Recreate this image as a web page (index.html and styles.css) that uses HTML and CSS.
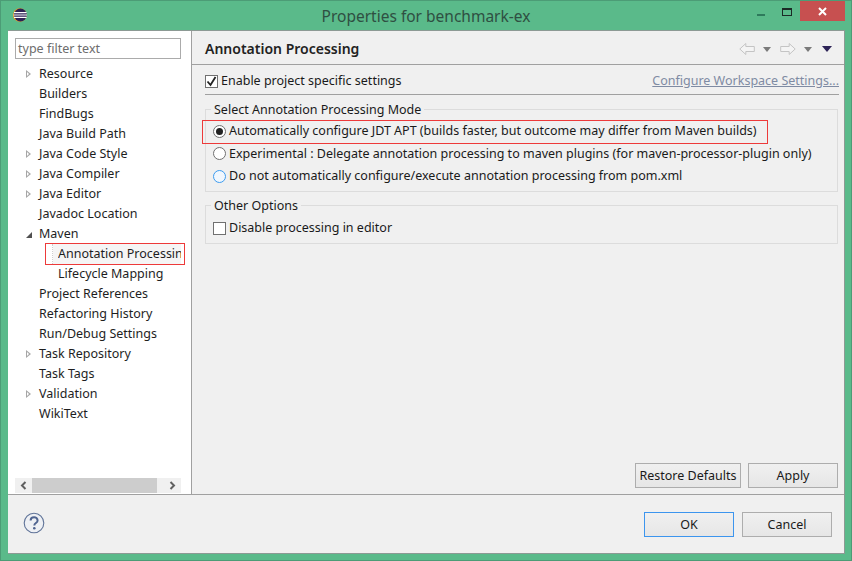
FILE: index.html
```html
<!DOCTYPE html>
<html lang="en">
<head>
<meta charset="utf-8">
<title>Properties for benchmark-ex</title>
<link rel="stylesheet" href="styles.css">
</head>
<body>
<div class="window">
  <header class="titlebar">
    <svg class="app-icon" width="16" height="16" viewBox="0 0 16 16">
      <circle cx="7.8" cy="8" r="6.8" fill="#f7941e"/>
      <circle cx="8.4" cy="8" r="6.4" fill="#2c2255"/>
      <path d="M2 5.6h12.6M1.6 8h13.4M2 10.4h12.6" stroke="#fff" stroke-width="1.1"/>
    </svg>
    <div class="title">Properties for benchmark-ex</div>
    <div class="win-controls">
      <span class="win-min"></span>
      <span class="win-max"></span>
      <span class="win-close">
        <svg width="9" height="9" viewBox="0 0 9 9"><path d="M1 1l7 7M8 1l-7 7" stroke="#fff" stroke-width="2"/></svg>
      </span>
    </div>
  </header>
  <div class="client">
    <div class="panes">
      <aside class="sidebar">
        <div class="filter">type filter text</div>
        <ul class="tree">
          <li class="row"><span class="tw closed"></span>Resource</li>
          <li class="row"><span class="tw"></span>Builders</li>
          <li class="row"><span class="tw"></span>FindBugs</li>
          <li class="row"><span class="tw"></span>Java Build Path</li>
          <li class="row"><span class="tw closed"></span>Java Code Style</li>
          <li class="row"><span class="tw closed"></span>Java Compiler</li>
          <li class="row"><span class="tw closed"></span>Java Editor</li>
          <li class="row"><span class="tw"></span>Javadoc Location</li>
          <li class="row"><span class="tw open"></span>Maven</li>
          <li class="row child selected"><span class="clip">Annotation Processing</span></li>
          <li class="row child"><span class="clip">Lifecycle Mapping</span></li>
          <li class="row"><span class="tw"></span>Project References</li>
          <li class="row"><span class="tw"></span>Refactoring History</li>
          <li class="row"><span class="tw"></span>Run/Debug Settings</li>
          <li class="row"><span class="tw closed"></span>Task Repository</li>
          <li class="row"><span class="tw"></span>Task Tags</li>
          <li class="row"><span class="tw closed"></span>Validation</li>
          <li class="row"><span class="tw"></span>WikiText</li>
        </ul>
        <div class="hscroll">
          <svg class="arrow" width="17" height="15" viewBox="0 0 17 15"><path d="M10.5 4l-3.5 3.500 3.500 3.500" fill="none" stroke="#606060" stroke-width="2"/></svg>
          <div class="track"><div class="thumb"></div></div>
          <svg class="arrow" width="24" height="15" viewBox="0 0 24 15"><path d="M13.500 4l3.500 3.500-3.500 3.500" fill="none" stroke="#606060" stroke-width="2"/></svg>
        </div>
        <div class="mark mark-tree"></div>
      </aside>
      <main class="page">
        <div class="page-head">
          <h1>Annotation Processing</h1>
          <div class="nav">
            <svg width="16" height="14" viewBox="0 0 16 14"><path d="M.8 7l6-5.500V4.500h8.500v5H6.800v3z" fill="#f4f4f4" stroke="#c4c4c4"/></svg>
            <span class="caret gray"></span>
            <svg width="16" height="14" viewBox="0 0 16 14"><path d="M15.200 7l-6-5.500V4.500H.7v5h8.500v3z" fill="#f4f4f4" stroke="#c4c4c4"/></svg>
            <span class="caret gray"></span>
            <span class="caret dark"></span>
          </div>
        </div>
        <div class="enable-row">
          <label class="opt">
            <span class="check on">
              <svg width="11" height="11" viewBox="0 0 11 11"><path d="M1.500 5.500l3 3.500 5-8" fill="none" stroke="#222" stroke-width="1.800"/></svg>
            </span>Enable project specific settings
          </label>
          <a class="link">Configure Workspace Settings...</a>
        </div>
        <div class="rule"></div>
        <section class="group mode">
          <div class="legend">Select Annotation Processing Mode</div>
          <label class="opt"><span class="radio on"></span>Automatically configure JDT APT (builds faster, but outcome may differ from Maven builds)</label>
          <label class="opt"><span class="radio"></span>Experimental : Delegate annotation processing to maven plugins (for maven-processor-plugin only)</label>
          <label class="opt"><span class="radio focus"></span>Do not automatically configure/execute annotation processing from pom.xml</label>
        </section>
        <section class="group other">
          <div class="legend">Other Options</div>
          <label class="opt"><span class="check"></span>Disable processing in editor</label>
        </section>
        <div class="page-actions">
          <button class="btn restore">Restore Defaults</button>
          <button class="btn apply">Apply</button>
        </div>
        <div class="mark mark-radio"></div>
      </main>
    </div>
    <footer class="footer">
      <svg class="help" width="22" height="22" viewBox="0 0 22 22">
        <circle cx="11" cy="11" r="9.800" fill="#eef0f4" stroke="#5f7398" stroke-width="1.100"/>
        <path d="M7.600 8.400c0-4.300 7-4.300 7 0 0 2.700-3.300 2.500-3.300 5" fill="none" stroke="#4f6490" stroke-width="2"/>
        <circle cx="11.300" cy="16.300" r="1.300" fill="#4f6490"/>
      </svg>
      <div class="footer-actions">
        <button class="btn default">OK</button>
        <button class="btn">Cancel</button>
      </div>
    </footer>
  </div>
</div>
</body>
</html>
```
FILE: styles.css
```css
* { box-sizing: border-box; }
html, body { margin: 0; height: 100%; }
body { font: 12.500px/16px "Noto Sans", "Open Sans", sans-serif; color: #1a1a1a; overflow: hidden; }
.window { width: 852px; height: 561px; background: #5aba8a; border: 1px solid #4c9c76; display: flex; flex-direction: column; padding: 0 6px 6px; }
.titlebar { height: 29px; display: flex; align-items: center; position: relative; flex: none; }
.app-icon { margin: 0 0 1px 5px; }
.title { position: absolute; left: 0; right: 0; top: 5px; text-align: center; font-size: 15.500px; line-height: 20px; color: #2f4f42; }
.win-controls { margin-left: auto; display: flex; align-items: flex-start; align-self: flex-start; position: relative; }
.win-min { width: 8px; height: 2px; background: #2e7a5c; margin: 13px 17px 0 0; }
.win-max { width: 10px; height: 8px; border: 1px solid #1c2a26; border-top-width: 2px; margin: 7px 8px 0 0; }
.win-close { width: 45px; height: 20px; background: #c75050; display: flex; align-items: center; justify-content: center; margin-right: 0; }
.client { flex: 1; display: flex; flex-direction: column; background: #f0f0f0; border: 1px solid #8c9a94; border-left: 0; min-height: 0; margin-left: 1px; }
.panes { flex: 1; display: flex; min-height: 0; border-bottom: 1px solid #a0a0a0; }
.sidebar { width: 184px; background: #fff; border-right: 1px solid #a0a0a0; padding: 7px 10px 0 7px; display: flex; flex-direction: column; position: relative; flex: none; }
.filter { height: 21px; border: 1px solid #ababab; padding-left: 2px; line-height: 19px; color: #6d6d6d; flex: none; }
.tree { list-style: none; margin: 5px 0 0; padding: 0; flex: 1; }
.row { height: 20px; line-height: 20px; display: flex; align-items: center; white-space: nowrap; color: #1e1e1e; }
.tw { width: 24px; height: 20px; flex: none; position: relative; }
.tw.closed::after { content: ""; position: absolute; left: 11px; top: 6px; border-left: 5px solid #a6a6a6; border-top: 4px solid transparent; border-bottom: 4px solid transparent; }
.tw.closed::before { content: ""; position: absolute; left: 12px; top: 8px; border-left: 2px solid #fff; border-top: 2px solid transparent; border-bottom: 2px solid transparent; z-index: 1; }
.tw.open::after { content: ""; position: absolute; left: 11px; top: 8px; border-right: 6px solid #505050; border-top: 6px solid transparent; }
.child { padding-left: 43px; }
.child .clip { overflow: hidden; display: block; width: 123px; }
.selected { background: linear-gradient(90deg, transparent 38px, #f5f5f5 38px); position: relative; }
.selected::before { content: ""; position: absolute; left: 37px; top: 0; bottom: 0; border-left: 1px dotted #cfcfcf; }
.hscroll { height: 15px; width: 166px; display: flex; margin-bottom: 1px; background: #f0f0f0; flex: none; }
.arrow { flex: none; display: block; }
.track { flex: 1; }
.thumb { height: 15px; background: #cdcdcd; width: 100%; }
.mark { position: absolute; border: 1px solid #ed3a3a; pointer-events: none; }
.mark-tree { left: 37px; top: 212px; width: 140px; height: 22px; }
.mark-radio { left: 10px; top: 89px; width: 566px; height: 24px; }
.page { flex: 1; position: relative; padding: 0 5px 0 13px; display: flex; flex-direction: column; min-width: 0; }
.page-head { height: 34px; flex: none; display: flex; align-items: center; justify-content: space-between; margin: 0 -5px 0 -13px; padding: 3px 12px 0 13px; border-bottom: 1px solid #a0a0a0; }
h1 { margin: 0; font-size: 14px; font-weight: 600; color: #222; }
.nav { display: flex; align-items: center; }
.caret { width: 0; height: 0; border-left: 4px solid transparent; border-right: 4px solid transparent; border-top: 5px solid #7a7a7a; margin: 0 9px 0 8px; }
.caret.dark { border-left-width: 5px; border-right-width: 5px; border-top: 6px solid #2d2357; margin: 0 0 0 1px; }
.enable-row { height: 29px; display: flex; align-items: center; justify-content: space-between; flex: none; padding-top: 3px; }
.opt { display: flex; align-items: center; height: 22px; white-space: nowrap; }
.link { color: #7f8ba3; text-decoration: underline; }
.rule { height: 1px; background: #a0a0a0; flex: none; margin-bottom: 14px; }
.group { border: 1px solid #dcdcdc; position: relative; padding: 10px 0 3px 7px; flex: none; margin-right: 1px; }
.mode { height: 83px; }
.mode .opt { height: 22.500px; }
.other { height: 39px; margin-top: 13px; padding-top: 11px; }
.legend { position: absolute; left: 5px; top: -8px; background: #f0f0f0; padding: 0 3px; line-height: 16px; }
.check { width: 13px; height: 13px; border: 1px solid #707070; background: #fff; margin-right: 3px; display: flex; align-items: center; justify-content: center; flex: none; }
.radio { width: 13px; height: 13px; border-radius: 50%; border: 1px solid #707070; background: #fff; margin-right: 3px; flex: none; display: flex; align-items: center; justify-content: center; }
.radio.on::after { content: ""; width: 7px; height: 7px; border-radius: 50%; background: #222; }
.radio.focus { border-color: #3c9cf0; background: #f0f7fe; }
.page-actions { margin-top: auto; display: flex; justify-content: flex-end; gap: 7px; padding: 0 1px 6px 0; }
.btn { height: 25px; width: 90px; background: linear-gradient(#f0f0f0, #e6e6e6); border: 1px solid #adadad; padding: 0; font: inherit; color: #1a1a1a; }
.restore { width: 106px; }
.default { border-color: #3c95ee; }
.footer { height: 58px; display: flex; align-items: center; justify-content: space-between; padding: 0 12px 0 15px; flex: none; }
.help { display: block; margin-top: -2px; }
.footer-actions { display: flex; gap: 8px; margin-top: 1px; }
```
